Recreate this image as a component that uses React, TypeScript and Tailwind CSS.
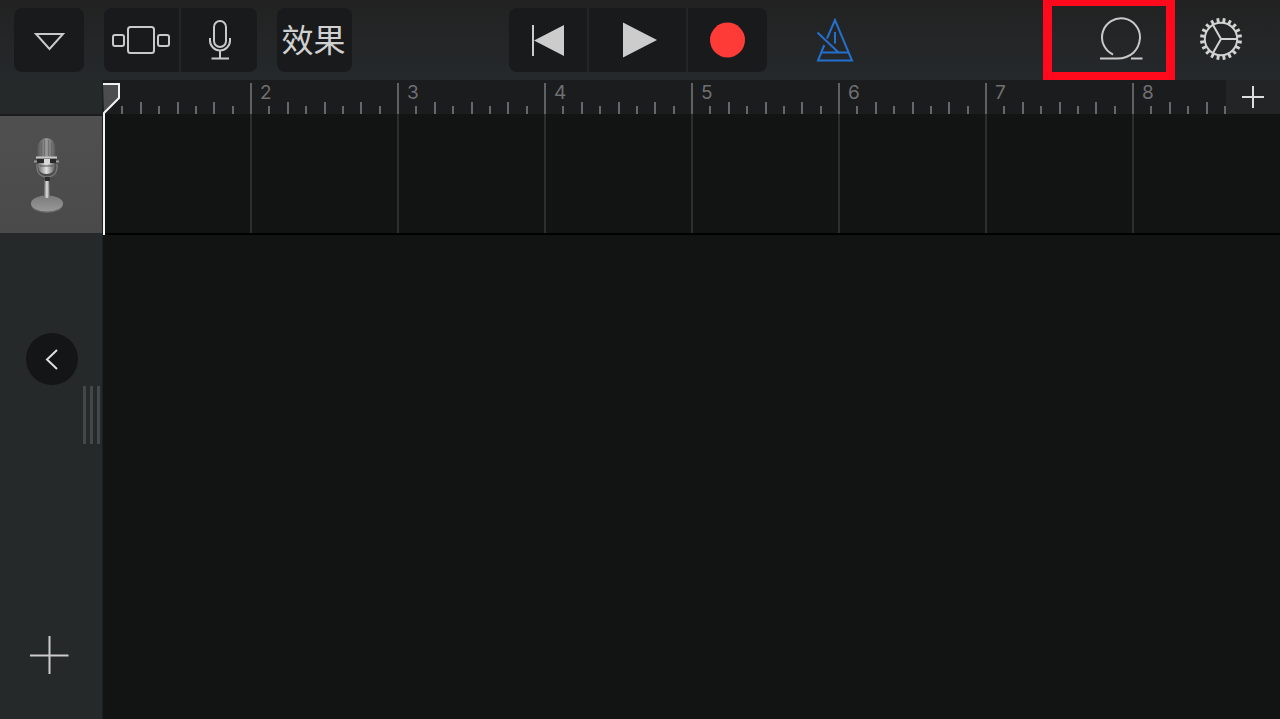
import type { ReactNode } from "react";

const MEASURES = [1, 2, 3, 4, 5, 6, 7, 8];
const TICKS = [1, 2, 3, 4, 5, 6, 7];
const TEETH = Array.from({ length: 20 }, (_, i) => i * 18 + 9);

function ToolButton({ label, className, children }: { label: string; className: string; children: ReactNode }) {
  return (
    <button type="button" aria-label={label} className={`flex h-16 items-center justify-center bg-[#191a1c] ${className}`}>
      {children}
    </button>
  );
}

function MetronomeIcon() {
  return (
    <svg width="40" height="48" viewBox="0 0 40 48" fill="none" stroke="#2470d0" strokeWidth="2">
      <path d="M12 22.500 20 4 37 44.500H3L9.300 29" />
      <path d="M6.500 36.500h27M20 16v11.500M2.500 16.500 23.500 36.500" />
    </svg>
  );
}

function LoopIcon() {
  return (
    <svg width="46" height="48" viewBox="0 0 46 48" fill="none" stroke="#c9c9c9" strokeWidth="2">
      <path d="M15 39.500A19 19 0 1 1 42 23C41 35 33 43.500 19 43.500H2" />
      <path d="M33 43.500h11.500" />
    </svg>
  );
}

function GearIcon() {
  return (
    <svg width="46" height="46" viewBox="-23 -22 46 46" fill="none" stroke="#d2d2d2" strokeWidth="2">
      <circle r="16.200" />
      {TEETH.map((a) => (
        <path key={a} d="M16.500 0H21" strokeWidth="2.900" transform={`rotate(${a})`} />
      ))}
      <path d="M0 0H16M0 0-8-14M0 0-8 14" />
    </svg>
  );
}

function StudioMic() {
  return (
    <svg width="36" height="78" viewBox="0 0 36 78">
      <defs>
        <linearGradient id="head" x1="0" x2="1">
          <stop offset="0" stopColor="#5a5a5a" />
          <stop offset=".3" stopColor="#7d7d7d" />
          <stop offset=".5" stopColor="#989898" />
          <stop offset=".75" stopColor="#7d7d7d" />
          <stop offset="1" stopColor="#565656" />
        </linearGradient>
        <linearGradient id="metal" x1="0" x2="1">
          <stop offset="0" stopColor="#6c6c6c" />
          <stop offset=".5" stopColor="#e0e0e0" />
          <stop offset="1" stopColor="#5c5c5c" />
        </linearGradient>
        <linearGradient id="base" x1="0" y1="0" x2="0" y2="1">
          <stop offset="0" stopColor="#7b7b7b" />
          <stop offset="1" stopColor="#989898" />
        </linearGradient>
      </defs>
      <ellipse cx="18" cy="68.500" rx="16" ry="8.500" fill="#666" />
      <ellipse cx="18" cy="67.500" rx="16" ry="8" fill="url(#base)" />
      <path d="M15.500 44h4.500l1 17q-3 2-6 0z" fill="url(#metal)" />
      <path d="M8 28v4q1 9 10 9 9 0 10-9v-4" fill="none" stroke="#777" strokeWidth="1.500" />
      <path d="M8.500 21V12a9 10 0 0 1 18 0v9z" fill="url(#head)" />
      <path d="M12.500 6v15M15.500 4v17M19.500 4v17M22.500 6v15" stroke="#606060" strokeWidth=".6" />
      <path d="M9 25h17v6q-1 7-8.500 7T9 31z" fill="url(#metal)" />
      <path d="M8 23h19v4H8z" fill="#292929" />
      <path d="M15 23h6v5h-6z" fill="#d8d8d8" />
      <path d="M7 21.500h21" stroke="#c8c8c8" strokeWidth="2" />
      <path d="M5 25.500h3M27 25.500h3" stroke="#999" strokeWidth="2" />
      <path d="M11 30h13" stroke="#555" strokeWidth="1" />
      <path d="M16 41h5v4h-5z" fill="#2d2d2d" />
    </svg>
  );
}

function Header() {
  return (
    <header className="grid h-20 shrink-0 grid-cols-[1fr_auto_1fr] items-center bg-linear-to-b from-[#222222] to-[#25292b] pr-[18px] pl-[14px]">
      <div className="flex gap-5">
        <ToolButton label="浏览器" className="w-[70px] rounded-lg">
          <svg width="34" height="24" viewBox="0 0 34 24" fill="none" stroke="#c9c9c9" strokeWidth="2">
            <path d="M4 6h27L17.500 21z" />
          </svg>
        </ToolButton>
        <div className="flex gap-0.5 overflow-hidden rounded-lg bg-[#232527]">
          <ToolButton label="轨道视图" className="w-[75px]">
            <svg width="60" height="32" viewBox="0 0 60 32" fill="none" stroke="#c9c9c9" strokeWidth="2">
              <rect x="16" y="3" width="26" height="26" rx="2.500" />
              <rect x="1" y="11" width="11" height="11" rx="2" />
              <rect x="46" y="11" width="11" height="11" rx="2" />
            </svg>
          </ToolButton>
          <ToolButton label="麦克风" className="w-[76px]">
            <svg width="28" height="42" viewBox="0 0 28 42" fill="none" stroke="#c9c9c9" strokeWidth="2">
              <rect x="9" y="2" width="12" height="26" rx="6" />
              <path d="M5 19v2.500a10 10 0 0 0 20 0V19M15 31.500V39.500M6.500 39.500h17.500" />
            </svg>
          </ToolButton>
        </div>
        <button
          type="button"
          className="flex h-16 w-[75px] items-center justify-center rounded-lg bg-[#191a1c] pr-0.5 pb-1 text-[32px] leading-none text-[#d0d0d0]"
        >
          效果
        </button>
      </div>

      <div className="flex gap-0.5 overflow-hidden rounded-lg bg-[#232527]">
        <ToolButton label="回到开头" className="w-[78px]">
          <svg width="34" height="36" viewBox="0 0 34 36" fill="#cccccc">
            <path d="M1 3h2v31H1zM3 18.500 33 3v31z" />
          </svg>
        </ToolButton>
        <ToolButton label="播放" className="w-[97px]">
          <svg width="38" height="36" viewBox="0 0 38 36" fill="#cccccc">
            <path d="M4 .500 38 18 4 35.500z" />
          </svg>
        </ToolButton>
        <ToolButton label="录音" className="w-[79px]">
          <svg width="36" height="36" viewBox="0 0 36 36" fill="#fe3b37">
            <circle cx="17.500" cy="18" r="17.500" />
          </svg>
        </ToolButton>
      </div>

      <div className="flex h-20 items-center">
        <button type="button" aria-label="节拍器" className="ml-[34px] flex h-16 w-[68px] items-center justify-center">
          <MetronomeIcon />
        </button>
        <button
          type="button"
          aria-label="循环乐段"
          className="ml-auto flex h-20 w-[132px] shrink-0 items-center justify-end border-x-[9px] border-t-[6px] border-b-8 border-[#ff0a1c] pr-[22px]"
        >
          <LoopIcon />
        </button>
        <button type="button" aria-label="设置" className="ml-[5px] flex h-16 w-[82px] shrink-0 items-center justify-center">
          <GearIcon />
        </button>
      </div>
    </header>
  );
}

function Sidebar() {
  return (
    <aside className="flex w-[103px] shrink-0 flex-col border-r border-[#1d2021] bg-[#25292a]">
      <div className="h-9 shrink-0 border-b-2 border-[#1a1d1e]" />
      <button
        type="button"
        aria-label="音频录音机"
        className="flex h-[117px] shrink-0 items-center justify-center bg-linear-to-b from-[#505051] to-[#4a4a4b] pr-2"
      >
        <StudioMic />
      </button>
      <button
        type="button"
        aria-label="收起"
        className="mt-[100px] ml-[26px] flex size-[52px] shrink-0 items-center justify-center rounded-full bg-[#141516]"
      >
        <svg width="20" height="24" viewBox="0 0 20 24" fill="none" stroke="#e0e0e0" strokeWidth="2">
          <path d="M15 3 5 12.500l10 9.500" />
        </svg>
      </button>
      <div className="mt-px mr-0.5 flex h-[58px] shrink-0 justify-end gap-1">
        <span className="w-[3px] bg-[#454849]" />
        <span className="w-[3px] bg-[#454849]" />
        <span className="w-[3px] bg-[#454849]" />
      </div>
      <button type="button" aria-label="添加轨道" className="mt-auto mb-8 flex h-16 shrink-0 items-center justify-center pr-1">
        <svg width="40" height="40" viewBox="0 0 40 40" fill="none" stroke="#cccccc" strokeWidth="2">
          <path d="M20.500 1v38M1 20.500h38.500" />
        </svg>
      </button>
    </aside>
  );
}

function Ruler() {
  return (
    <div className="flex h-[34px]">
      <div className="flex min-w-0 flex-1 overflow-hidden bg-[#1b1c1e] pt-[3px]">
        {MEASURES.map((n) => (
          <div
            key={n}
            className={`flex w-[147px] shrink-0 flex-col justify-between border-l-2 ${n === 1 ? "border-transparent" : "border-[#606162]"}`}
          >
            <div className="h-[18px] pl-2 font-[Inter] text-[19px] leading-5 text-[#6f7071]">{n > 1 && n}</div>
            <div className="-mr-0.5 grid h-3 grid-cols-8 items-end">
              {TICKS.map((t) => (
                <span key={t} className={`border-r-2 border-[#66676a] ${t % 2 ? "h-2" : "h-3"}`} />
              ))}
            </div>
          </div>
        ))}
      </div>
      <button type="button" aria-label="添加段落" className="flex w-[54px] shrink-0 items-center justify-center bg-[#222425]">
        <svg width="24" height="24" viewBox="0 0 24 24" fill="none" stroke="#dddddd" strokeWidth="2">
          <path d="M12 1v22M1 12h22" />
        </svg>
      </button>
    </div>
  );
}

function Timeline() {
  return (
    <main className="relative flex min-w-0 flex-1 flex-col">
      <Ruler />
      <div className="flex h-[121px] overflow-hidden border-b-2 border-black">
        {MEASURES.map((n) => (
          <div key={n} className={`w-[147px] shrink-0 border-l-2 ${n === 1 ? "border-transparent" : "border-[#2c2e2f]"}`} />
        ))}
      </div>
      <svg className="absolute top-[3px] left-0" width="18" height="152" viewBox="0 0 18 152" fill="none">
        <path d="M0 1H16V15L1 30z" fill="#4b4d4f" />
        <path d="M0 1H16V15L1 30V152" stroke="#f2f2f2" strokeWidth="2" />
      </svg>
    </main>
  );
}

export default function App() {
  return (
    <div className="flex min-h-screen flex-col bg-[#121414] font-['Noto_Sans_CJK_SC',sans-serif]">
      <Header />
      <div className="flex flex-1">
        <Sidebar />
        <Timeline />
      </div>
    </div>
  );
}
